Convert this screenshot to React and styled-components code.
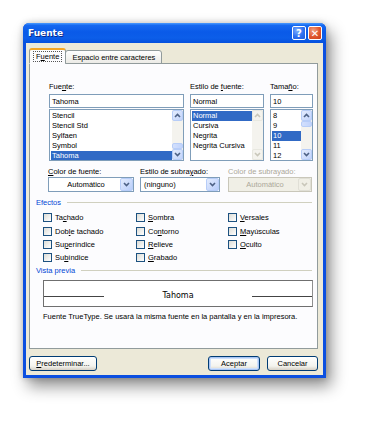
import React from 'react';
import styled, { createGlobalStyle } from 'styled-components';

const GlobalStyle = createGlobalStyle`
  html, body {
    margin: 0;
    padding: 0;
    background: #ffffff;
  }
  body {
    font-family: "Liberation Sans", Arial, sans-serif;
    font-size: 7.5px;
    color: #000;
  }
`;

const Page = styled.div`
  width: 369px;
  height: 422px;
  padding: 23px 0 0 23px;
  box-sizing: border-box;
`;

const Window = styled.div`
  width: 303px;
  height: 355px;
  box-sizing: border-box;
  display: flex;
  flex-direction: column;
  border-radius: 6px 6px 0 0;
  background: #0b4fe0;
  box-shadow: 5px 8px 16px rgba(0, 0, 0, 0.45), 0 0 6px rgba(0, 0, 0, 0.2);
  padding: 0 3px 3px 3px;
`;

const TitleBar = styled.div`
  height: 20px;
  margin: 0 -3px;
  padding: 0 4px 0 5px;
  display: flex;
  align-items: center;
  border-radius: 6px 6px 0 0;
  background: linear-gradient(#4a9bff 0%, #1568f0 12%, #0a5ae8 45%, #0c5ee9 75%, #0550dd 100%);
`;

const Title = styled.span`
  flex: 1;
  color: #fff;
  font-family: "DejaVu Sans", sans-serif;
  font-weight: bold;
  font-size: 9px;
  text-shadow: 1px 1px 0 #0a2a8a;
`;

const CaptionButton = styled.div`
  width: 14px;
  height: 14px;
  box-sizing: border-box;
  margin-left: 2px;
  border: 1px solid #fff;
  border-radius: 2px;
  display: flex;
  align-items: center;
  justify-content: center;
  color: #fff;
  font-family: "DejaVu Sans", sans-serif;
  font-weight: bold;
  font-size: 10px;
  background: ${({ $close }) =>
    $close
      ? 'radial-gradient(circle at 35% 30%, #f0a080, #e0552d 55%, #c8401c)'
      : 'radial-gradient(circle at 35% 30%, #7fb0ff, #2d6ff0 55%, #1d5ce0)'};
`;

const Body = styled.div`
  flex: 1;
  background: #ece9d8;
  padding: 5px 5px 4px 3px;
  display: flex;
  flex-direction: column;
`;

const TabStrip = styled.div`
  display: flex;
  align-items: flex-end;
  height: 16px;
  position: relative;
  z-index: 1;
  margin-bottom: -1px;
`;

const Tab = styled.div`
  box-sizing: border-box;
  height: ${({ $active }) => ($active ? '16px' : '14px')};
  padding: 0 3px;
  display: flex;
  align-items: center;
  border: 1px solid #919b9c;
  border-bottom: ${({ $active }) => ($active ? '1px solid #fcfcfe' : '1px solid #919b9c')};
  border-top: ${({ $active }) => ($active ? '2px solid #f5a623' : '1px solid #919b9c')};
  border-radius: 3px 3px 0 0;
  background: ${({ $active }) => ($active ? '#fcfcfe' : 'linear-gradient(#fefefe, #ecebe6)')};
  margin-left: ${({ $active }) => ($active ? '0' : '-1px')};
`;

const TabLabel = styled.span`
  padding: 0 2px;
  border: ${({ $focus }) => ($focus ? '1px dotted #555' : '1px solid transparent')};
  line-height: 9px;
`;

const Key = styled.span`
  text-decoration: underline;
`;

const Panel = styled.div`
  flex: 1;
  box-sizing: border-box;
  border: 1px solid #919b9c;
  background: #fcfcfe;
  padding: 18px 4px 0 6px;
  display: flex;
  flex-direction: column;
`;

const FontRow = styled.div`
  display: grid;
  grid-template-columns: 135px 74px 43px;
  column-gap: 6px;
  padding-left: 13px;
`;

const Field = styled.div`
  display: flex;
  flex-direction: column;
`;

const Label = styled.div`
  height: 9px;
  line-height: 9px;
  margin-bottom: ${({ $gap }) => ($gap === undefined ? 3 : $gap)}px;
  color: ${({ $disabled }) => ($disabled ? '#aca899' : '#000')};
  white-space: nowrap;
`;

const TextBox = styled.div`
  height: 14px;
  box-sizing: border-box;
  border: 1px solid #7f9db9;
  background: #fff;
  padding: 0 2px;
  display: flex;
  align-items: center;
`;

const ListBox = styled.div`
  margin-top: 1px;
  height: 52px;
  box-sizing: border-box;
  border: 1px solid #7f9db9;
  background: #fff;
  display: flex;
`;

const ListItems = styled.div`
  flex: 1;
  padding: 1px 0 0 1px;
  overflow: hidden;
`;

const ListItem = styled.div`
  height: 10px;
  line-height: 10px;
  padding-left: 1px;
  white-space: nowrap;
  background: ${({ $selected }) => ($selected ? '#316ac5' : 'transparent')};
  color: ${({ $selected }) => ($selected ? '#fff' : '#000')};
  box-sizing: border-box;
`;

const ScrollBar = styled.div`
  width: 11px;
  background: #f4f3ee;
  display: flex;
  flex-direction: column;
`;

const ScrollButton = styled.div`
  height: 11px;
  box-sizing: border-box;
  border: 1px solid ${({ $disabled }) => ($disabled ? '#e8e8e0' : '#b7cdf8')};
  border-radius: 2px;
  background: ${({ $disabled }) =>
    $disabled ? '#f4f3ee' : 'linear-gradient(135deg, #e4ecfd, #c1d3fb)'};
  display: flex;
  align-items: center;
  justify-content: center;
`;

const ScrollTrack = styled.div`
  flex: 1;
  display: flex;
  flex-direction: column;
  justify-content: ${({ $thumb }) => ($thumb === 'bottom' ? 'flex-end' : 'flex-start')};
`;

const Thumb = styled.div`
  height: 6px;
  box-sizing: border-box;
  border: 1px solid #b7cdf8;
  border-radius: 2px;
  background: linear-gradient(90deg, #d3e0fd, #c1d3fb);
`;

const Chevron = ({ up, disabled }) => (
  <svg width="7" height="5" viewBox="0 0 7 5">
    <path
      d={up ? 'M1 4 L3.5 1.5 L6 4' : 'M1 1 L3.5 3.5 L6 1'}
      fill="none"
      stroke={disabled ? '#c9c7ba' : '#4d6185'}
      strokeWidth="1.6"
    />
  </svg>
);

const Scroll = ({ thumb, disabled }) => (
  <ScrollBar>
    <ScrollButton $disabled={disabled}>
      <Chevron up disabled={disabled} />
    </ScrollButton>
    <ScrollTrack $thumb={thumb}>{thumb && <Thumb />}</ScrollTrack>
    <ScrollButton $disabled={disabled}>
      <Chevron disabled={disabled} />
    </ScrollButton>
  </ScrollBar>
);

const ComboRow = styled.div`
  display: grid;
  grid-template-columns: 86px 80px 86px;
  column-gap: 6px;
  padding-left: 12px;
  margin-top: 6px;
  & > div:last-child {
    margin-left: 2px;
  }
`;

const Combo = styled.div`
  height: 15px;
  box-sizing: border-box;
  border: 1px solid ${({ $disabled }) => ($disabled ? '#c9c7ba' : '#7f9db9')};
  background: ${({ $disabled }) => ($disabled ? '#f0efe6' : '#fff')};
  color: ${({ $disabled }) => ($disabled ? '#aca899' : '#000')};
  display: flex;
  align-items: center;
`;

const ComboText = styled.span`
  flex: 1;
  text-align: ${({ $center }) => ($center ? 'center' : 'left')};
  padding-left: 3px;
`;

const ComboArrow = styled.div`
  width: 13px;
  height: 13px;
  box-sizing: border-box;
  border: 1px solid ${({ $disabled }) => ($disabled ? '#e0dfd6' : '#b7cdf8')};
  border-radius: 2px;
  background: ${({ $disabled }) =>
    $disabled ? '#f0efe6' : 'linear-gradient(135deg, #e4ecfd, #b8cdfa)'};
  display: flex;
  align-items: center;
  justify-content: center;
`;

const GroupTitle = styled.div`
  display: flex;
  align-items: center;
  color: #0046d5;
  height: 9px;
  margin-top: ${({ $top }) => $top}px;
  &::after {
    content: '';
    flex: 1;
    margin-left: 6px;
    margin-right: 1px;
    border-top: 1px solid #d0d0bf;
  }
`;

const Effects = styled.div`
  display: grid;
  grid-template-columns: 93px 92px 1fr;
  grid-auto-rows: 13.4px;
  padding-left: 7px;
  margin-top: 4px;
`;

const CheckItem = styled.div`
  display: flex;
  align-items: center;
  white-space: nowrap;
`;

const Box = styled.span`
  width: 9px;
  height: 9px;
  box-sizing: border-box;
  border: 1px solid #1c5180;
  background: linear-gradient(135deg, #dcdcd6, #ffffff);
  margin-right: 3px;
  flex-shrink: 0;
`;

const Preview = styled.div`
  margin: 5px 0 0 7px;
  height: 27px;
  box-sizing: border-box;
  border: 1px solid #6f6f6f;
  border-right-color: #8f8f8f;
  background: #fff;
  display: flex;
  align-items: flex-end;
  padding-bottom: 9px;
`;

const PreviewLine = styled.div`
  width: 60px;
  border-top: 1px solid #444;
`;

const PreviewText = styled.div`
  flex: 1;
  text-align: center;
  font-family: "DejaVu Sans", sans-serif;
  font-size: 8px;
  transform: translateY(3px);
`;

const Note = styled.div`
  margin: 5px 0 0 7px;
  white-space: nowrap;
`;

const Footer = styled.div`
  display: flex;
  align-items: center;
  margin-top: 7px;
  gap: 7px;
`;

const Button = styled.div`
  width: ${({ $w }) => $w}px;
  height: 15px;
  box-sizing: border-box;
  border: 1px solid #003c74;
  border-radius: 3px;
  background: linear-gradient(#ffffff, #f3f3ee 70%, #d6d0c5);
  box-shadow: ${({ $default }) => ($default ? 'inset 0 0 0 1px #a9c5f4, inset 0 0 0 2px #cee0fb' : 'none')};
  display: flex;
  align-items: center;
  justify-content: center;
  margin-right: ${({ $push }) => ($push ? 'auto' : '0')};
`;

const fonts = ['Stencil', 'Stencil Std', 'Sylfaen', 'Symbol', 'Tahoma'];
const styles = ['Normal', 'Cursiva', 'Negrita', 'Negrita Cursiva'];
const sizes = ['8', '9', '10', '11', '12'];

const effects = [
  [<>Ta<Key>c</Key>hado</>, <><Key>S</Key>ombra</>, <><Key>V</Key>ersales</>],
  [<>Dob<Key>l</Key>e tachado</>, <>Co<Key>n</Key>torno</>, <><Key>M</Key>ayúsculas</>],
  [<>Su<Key>p</Key>eríndice</>, <><Key>R</Key>elieve</>, <><Key>O</Key>culto</>],
  [<>Su<Key>b</Key>índice</>, <><Key>G</Key>rabado</>, null],
];

export default function App() {
  return (
    <>
      <GlobalStyle />
      <Page>
        <Window>
          <TitleBar>
            <Title>Fuente</Title>
            <CaptionButton>?</CaptionButton>
            <CaptionButton $close>✕</CaptionButton>
          </TitleBar>
          <Body>
            <TabStrip>
              <Tab $active>
                <TabLabel $focus>F<Key>u</Key>ente</TabLabel>
              </Tab>
              <Tab>
                <TabLabel>Espacio entre caracteres</TabLabel>
              </Tab>
            </TabStrip>
            <Panel>
              <FontRow>
                <Field>
                  <Label>Fue<Key>n</Key>te:</Label>
                  <TextBox>Tahoma</TextBox>
                  <ListBox>
                    <ListItems>
                      {fonts.map((f) => (
                        <ListItem key={f} $selected={f === 'Tahoma'}>{f}</ListItem>
                      ))}
                    </ListItems>
                    <Scroll thumb="bottom" />
                  </ListBox>
                </Field>
                <Field>
                  <Label>Estilo de <Key>f</Key>uente:</Label>
                  <TextBox>Normal</TextBox>
                  <ListBox>
                    <ListItems>
                      {styles.map((s) => (
                        <ListItem key={s} $selected={s === 'Normal'}>{s}</ListItem>
                      ))}
                    </ListItems>
                    <Scroll disabled />
                  </ListBox>
                </Field>
                <Field>
                  <Label>Tama<Key>ñ</Key>o:</Label>
                  <TextBox>10</TextBox>
                  <ListBox>
                    <ListItems>
                      {sizes.map((s) => (
                        <ListItem key={s} $selected={s === '10'}>{s}</ListItem>
                      ))}
                    </ListItems>
                    <Scroll thumb="top" />
                  </ListBox>
                </Field>
              </FontRow>

              <ComboRow>
                <Field>
                  <Label $gap={1}><Key>C</Key>olor de fuente:</Label>
                  <Combo>
                    <ComboText $center>Automático</ComboText>
                    <ComboArrow><Chevron /></ComboArrow>
                  </Combo>
                </Field>
                <Field>
                  <Label $gap={1}>Estilo de subra<Key>y</Key>ado:</Label>
                  <Combo>
                    <ComboText>(ninguno)</ComboText>
                    <ComboArrow><Chevron /></ComboArrow>
                  </Combo>
                </Field>
                <Field>
                  <Label $gap={1} $disabled>Color de subrayado:</Label>
                  <Combo $disabled>
                    <ComboText $center>Automático</ComboText>
                    <ComboArrow $disabled><Chevron disabled /></ComboArrow>
                  </Combo>
                </Field>
              </ComboRow>

              <GroupTitle $top={6}>Efectos</GroupTitle>
              <Effects>
                {effects.flat().map((e, i) =>
                  e ? (
                    <CheckItem key={i}>
                      <Box />
                      <span>{e}</span>
                    </CheckItem>
                  ) : (
                    <span key={i} />
                  )
                )}
              </Effects>

              <GroupTitle $top={1}>Vista previa</GroupTitle>
              <Preview>
                <PreviewLine />
                <PreviewText>Tahoma</PreviewText>
                <PreviewLine />
              </Preview>
              <Note>Fuente TrueType. Se usará la misma fuente en la pantalla y en la impresora.</Note>
            </Panel>
            <Footer>
              <Button $w={68} $push><span><Key>P</Key>redeterminar...</span></Button>
              <Button $w={52} $default>Aceptar</Button>
              <Button $w={51}>Cancelar</Button>
            </Footer>
          </Body>
        </Window>
      </Page>
    </>
  );
}
